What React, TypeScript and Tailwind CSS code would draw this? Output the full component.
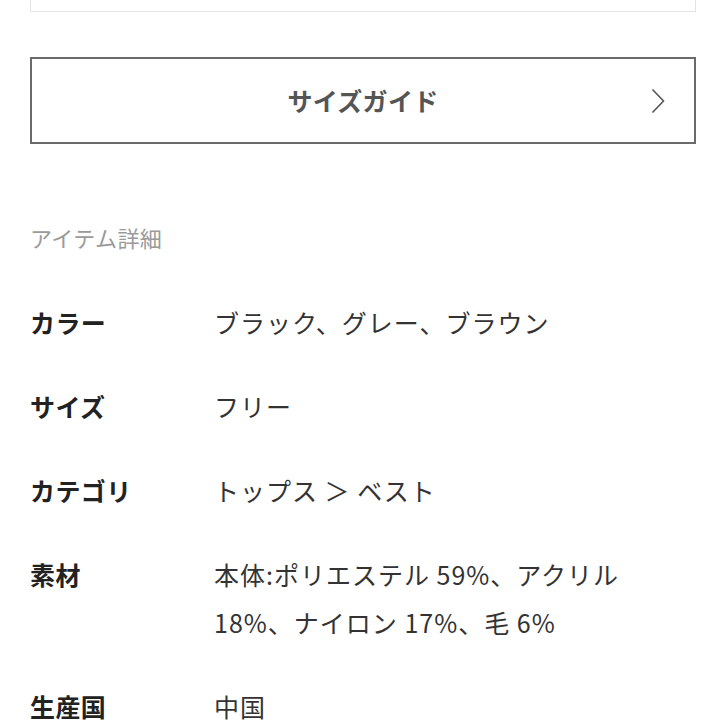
import React from "react";

const rows: { label: string; value: React.ReactNode }[] = [
  { label: "カラー", value: "ブラック、グレー、ブラウン" },
  { label: "サイズ", value: "フリー" },
  { label: "カテゴリ", value: "トップス ＞ ベスト" },
  {
    label: "素材",
    value: (
      <>
        本体:ポリエステル 59%、アクリル
        <br />
        18%、ナイロン 17%、毛 6%
      </>
    ),
  },
  { label: "生産国", value: "中国" },
];

export default function App() {
  return (
    <div
      className="w-[726px] h-[726px] overflow-hidden bg-white px-[30px]"
      style={{ fontFamily: '"Noto Sans CJK JP", "Noto Sans", sans-serif' }}
    >
      {/* tail of the box above */}
      <div className="h-[12px] border-x border-b border-[#e4e4e4]" />

      {/* size guide button */}
      <div className="mt-[45px] h-[87px] border-2 border-[#6a6a6a] relative flex items-center justify-center">
        <span className="text-[25px] leading-[30px] font-bold text-[#555] tracking-[0.3px] -mt-[2px]">
          サイズガイド
        </span>
        <svg
          className="absolute right-[29px] top-1/2 -translate-y-1/2"
          width="14"
          height="26"
          viewBox="0 0 14 26"
          fill="none"
          stroke="#555"
          strokeWidth={1.6}
        >
          <path d="M1.5 1.5 L12.5 13 L1.5 24.5" />
        </svg>
      </div>

      {/* heading */}
      <div className="mt-[78px] text-[22px] leading-[30px] text-[#9a9a9a] tracking-[0.4px]">
        アイテム詳細
      </div>

      {/* details */}
      <div className="mt-[46px] flex flex-col gap-[36px]">
        {rows.map((r) => (
          <div key={r.label} className="flex">
            <div className="w-[184px] shrink-0 text-[25px] leading-[48px] font-bold text-[#222] tracking-[0.4px]">
              {r.label}
            </div>
            <div className="text-[25px] leading-[48px] text-[#333] tracking-[1px]">
              {r.value}
            </div>
          </div>
        ))}
      </div>
    </div>
  );
}
